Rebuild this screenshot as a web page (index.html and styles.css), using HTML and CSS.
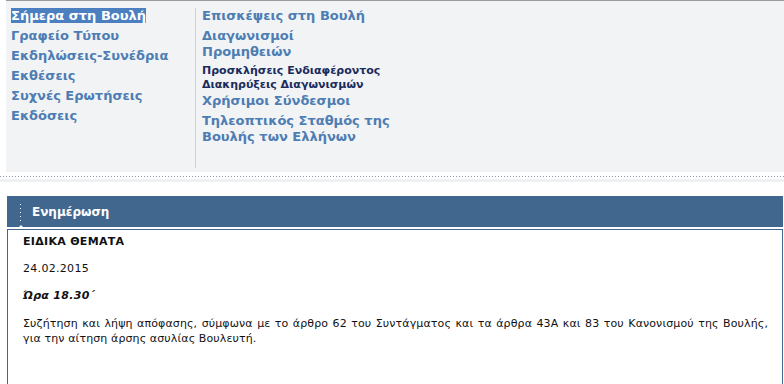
FILE: index.html
```html
<!DOCTYPE html>
<html lang="el">
<head>
  <meta charset="UTF-8" />
  <meta name="viewport" content="width=device-width, initial-scale=1" />
  <title>Βουλή των Ελλήνων - Ενημέρωση</title>
  <link rel="stylesheet" href="styles.css">
</head>
<body>
  <div class="menu">
    <ul class="menu-col first">
      <li><a class="active" href="#">Σήμερα στη Βουλή</a></li>
      <li><a href="#">Γραφείο Τύπου</a></li>
      <li><a href="#">Εκδηλώσεις-Συνέδρια</a></li>
      <li><a href="#">Εκθέσεις</a></li>
      <li><a href="#">Συχνές Ερωτήσεις</a></li>
      <li><a href="#">Εκδόσεις</a></li>
    </ul>
    <ul class="menu-col">
      <li><a href="#">Επισκέψεις στη Βουλή</a></li>
      <li><a href="#">Διαγωνισμοί<br>Προμηθειών</a>
        <ul class="sub">
          <li><a href="#">Προσκλήσεις Ενδιαφέροντος</a></li>
          <li><a href="#">Διακηρύξεις Διαγωνισμών</a></li>
        </ul>
      </li>
      <li><a href="#">Χρήσιμοι Σύνδεσμοι</a></li>
      <li><a href="#">Τηλεοπτικός Σταθμός της<br>Βουλής των Ελλήνων</a></li>
    </ul>
  </div>
  <div class="divider"></div>

  <div class="news">
    <div class="news-head">
      <span class="marker"></span>
      <h3>Ενημέρωση</h3>
    </div>
    <div class="news-body">
      <h4>ΕΙΔΙΚΑ ΘΕΜΑΤΑ</h4>
      <p>24.02.2015</p>
      <p class="time">Ώρα 18.30΄</p>
      <p class="text">Συζήτηση και λήψη απόφασης, σύμφωνα με το άρθρο 62 του Συντάγματος και τα άρθρα 43Α και 83 του Κανονισμού της Βουλής, για την αίτηση άρσης ασυλίας Βουλευτή.</p>
    </div>
  </div>
</body>
</html>
```

FILE: styles.css
```css
body {
  margin: 0;
  font-family: "DejaVu Sans", Verdana, sans-serif;
  background: #fff;
}
ul {
  list-style: none;
  margin: 0;
  padding: 0;
}
a {
  text-decoration: none;
}

.menu {
  margin-left: 6px;
  height: 171px;
  border-top: 1px solid #9a9a9a;
  background: #f2f3f5;
  display: flex;
  align-items: flex-start;
}
.menu-col {
  padding-top: 7px;
}
.menu-col.first {
  width: 184px;
  height: 160px;
  margin-top: 7px;
  padding: 0 0 0 5px;
  border-right: 1px solid #cfd1d5;
}
.menu-col:last-child {
  padding-left: 6px;
}
.menu-col > li {
  margin-bottom: 4px;
  font-size: 13px;
  line-height: 16px;
}
.menu-col > li > a {
  font-weight: bold;
  color: #4d7db3;
}
.menu-col > li > a.active {
  background: #4b7fbf;
  color: #fff;
}
.sub {
  margin: 4px 0 -3px;
}
.sub li {
  font-size: 11px;
  line-height: 14px;
}
.sub a {
  font-weight: bold;
  color: #1b2b5c;
}

.divider {
  margin-top: 4px;
  height: 1px;
  border-bottom: 3px solid #eff0f3;
  background: repeating-linear-gradient(to right, #8d93ad 0 1px, transparent 1px 3px);
  padding-bottom: 2px;
  background-clip: content-box;
}

.news {
  margin: 14px 1px 0 7px;
}
.news-head {
  background: #41678f;
  height: 31px;
  display: flex;
  align-items: center;
  position: relative;
}
.marker {
  width: 1px;
  height: 18px;
  margin: 2px 0 0 13px;
  background: repeating-linear-gradient(to bottom, #fff 0 1px, transparent 1px 4px);
}
.marker::after {
  content: "";
  position: absolute;
  left: 10px;
  bottom: -2px;
  border: 4px solid transparent;
  border-bottom-color: #fff;
  border-top: 0;
}
.news-head h3 {
  margin: 0 0 0 11px;
  font-size: 12px;
  font-weight: bold;
  color: #fff;
}
.news-body {
  margin-top: 2px;
  border: 1px solid #41678f;
  border-bottom: 0;
  height: 160px;
  padding: 5px 14px 0 15px;
  font-size: 11px;
  letter-spacing: 0.3px;
  color: #111;
}
.news-body h4 {
  margin: 0 0 13px;
  font-size: 11px;
  font-weight: bold;
  line-height: 14px;
}
.news-body p {
  margin: 0 0 13px;
  line-height: 14px;
}
.news-body .time {
  font-weight: bold;
  font-style: italic;
}
.news-body .text {
  line-height: 15px;
  letter-spacing: 0.12px;
  text-align: justify;
}
```
